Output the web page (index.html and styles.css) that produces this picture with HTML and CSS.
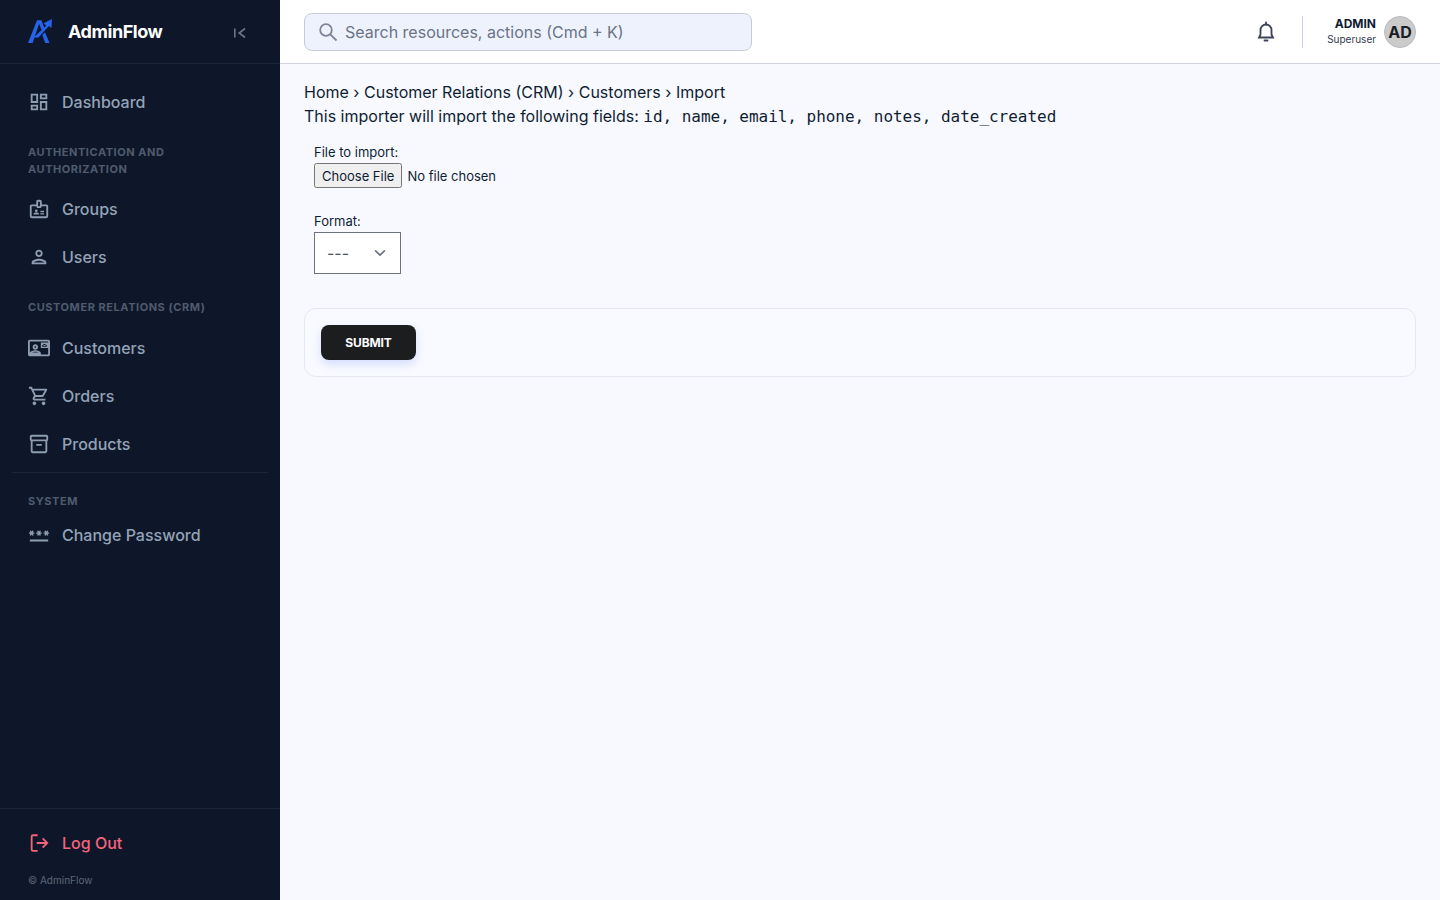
FILE: index.html
```html
<!DOCTYPE html>
<html lang="en">
<head>
  <meta charset="UTF-8" />
  <title>Import | AdminFlow</title>
  <link rel="stylesheet" href="styles.css">
</head>
<body>
  <aside class="sidebar">
    <div class="brand">
      <svg class="logo" viewBox="0 0 24 24" width="24" height="24" fill="#2563eb">
        <path d="M0 24 9 1.200h4.400l3.200 8.300-2.500 2.800-3-7.600L4.600 24z"/>
        <path d="M5.500 18.600 18.300 6.800 15.700 4.300 24 0l-.6 9.200-2.500-2.300L10.500 18.600z"/>
        <path d="M14.300 15.900 17 13.300l4.500 10.700h-4.300z"/>
      </svg>
      <span class="brand-name">AdminFlow</span>
      <svg class="collapse" viewBox="0 0 14 14" width="14" height="14" fill="none" stroke="currentColor" stroke-width="1.600">
        <path d="M1.800 2.500v9M12 2.500 6.200 7l5.800 4.500"/>
      </svg>
    </div>

    <nav class="nav">
      <a class="nav-item">
        <svg class="icon" viewBox="0 0 24 24"><path d="M19 5v2h-4V5h4M9 5v6H5V5h4m10 8v6h-4v-6h4M9 17v2H5v-2h4M21 3h-8v6h8V3zM11 3H3v10h8V3zm10 8h-8v10h8V11zm-10 4H3v6h8v-6z"/></svg>
        Dashboard
      </a>

      <div class="nav-label nav-label-first">Authentication and Authorization</div>
      <a class="nav-item">
        <svg class="icon" viewBox="0 0 24 24"><path d="M20 7h-5V4c0-1.100-.9-2-2-2h-2c-1.100 0-2 .9-2 2v3H4c-1.100 0-2 .9-2 2v11c0 1.100.9 2 2 2h16c1.100 0 2-.9 2-2V9c0-1.100-.9-2-2-2zM11 7V4h2v5h-2V7zm9 13H4V9h5c0 1.100.9 2 2 2h2c1.100 0 2-.9 2-2h5v11z"/><circle cx="9" cy="14" r="1.500"/><path d="M11.080 16.180C10.440 15.900 9.740 15.750 9 15.750s-1.440.15-2.080.43C6.360 16.420 6 16.960 6 17.570V18h6v-.43c0-.61-.36-1.150-.92-1.390zM13.500 14h4v1.500h-4zM13.500 16.500h4V18h-4z"/></svg>
        Groups
      </a>
      <a class="nav-item">
        <svg class="icon" viewBox="0 0 24 24"><path d="M12 6c1.100 0 2 .9 2 2s-.9 2-2 2-2-.9-2-2 .9-2 2-2m0 10c2.700 0 5.800 1.290 6 2H6c.23-.72 3.310-2 6-2m0-12C9.790 4 8 5.790 8 8s1.790 4 4 4 4-1.790 4-4-1.790-4-4-4zm0 10c-2.670 0-8 1.340-8 4v2h16v-2c0-2.660-5.330-4-8-4z"/></svg>
        Users
      </a>

      <div class="nav-label">Customer Relations (CRM)</div>
      <a class="nav-item">
        <svg class="icon" viewBox="0 0 24 24"><path d="M21 8V7l-3 2-3-2v1l3 2 3-2zm1-5H2C.9 3 0 3.900 0 5v14c0 1.100.9 2 2 2h20c1.100 0 1.990-.9 1.990-2L24 5c0-1.100-.9-2-2-2zm0 16H2V5h20v14zM14 17.590c0-2-3.970-3.090-6-3.090s-6 1.090-6 3.090V19h12v-1.410zM4.480 17c.74-.5 2.220-1 3.520-1s2.770.49 3.520 1H4.480zM8 14c1.650 0 3-1.350 3-3s-1.350-3-3-3-3 1.350-3 3 1.350 3 3 3zm0-4c.55 0 1 .45 1 1s-.45 1-1 1-1-.45-1-1 .45-1 1-1zm6-4v6h8V6h-8zm6.500 4.500h-5v-3h5v3z"/></svg>
        Customers
      </a>
      <a class="nav-item">
        <svg class="icon" viewBox="0 0 24 24"><path d="M15.550 13c.75 0 1.410-.41 1.750-1.030l3.580-6.490c.37-.66-.11-1.480-.87-1.480H5.210l-.94-2H1v2h2l3.600 7.590-1.350 2.440C4.520 15.370 5.480 17 7 17h12v-2H7l1.100-2h7.450zM6.160 6h12.150l-2.760 5H8.530L6.160 6zM7 18c-1.100 0-1.990.9-1.990 2S5.900 22 7 22s2-.9 2-2-.9-2-2-2zm10 0c-1.100 0-1.990.9-1.990 2s.89 2 1.990 2 2-.9 2-2-.9-2-2-2z"/></svg>
        Orders
      </a>
      <a class="nav-item">
        <svg class="icon" viewBox="0 0 24 24"><path d="M20 2H4c-1 0-2 .9-2 2v3.010c0 .72.43 1.340 1 1.690V20c0 1.100 1.100 2 2 2h14c.9 0 2-.9 2-2V8.700c.57-.35 1-.97 1-1.690V4c0-1.100-1-2-2-2zm-1 18H5V9h14v11zm1-13H4V4h16v3zM9 12h6v2H9z"/></svg>
        Products
      </a>

      <div class="nav-divider"></div>

      <div class="nav-label nav-label-system">System</div>
      <a class="nav-item">
        <svg class="icon" viewBox="0 0 24 24"><path d="M2 17h20v2H2v-2zm1.150-4.050L4 11.470l.85 1.480 1.300-.75-.85-1.480H7v-1.500H5.300l.85-1.470L4.850 7 4 8.470 3.150 7l-1.300.75.85 1.470H1v1.500h1.700l-.85 1.480 1.300.75zm6.700-.75 1.300.75.85-1.480.85 1.480 1.300-.75-.85-1.480H15v-1.500h-1.700l.85-1.470-1.300-.75L12 8.470 11.150 7l-1.300.75.85 1.470H9v1.500h1.700l-.85 1.480zM23 9.220h-1.700l.85-1.470-1.300-.75L20 8.470 19.150 7l-1.300.75.85 1.470H17v1.500h1.700l-.85 1.480 1.300.75.85-1.480.85 1.480 1.300-.75-.85-1.480H23v-1.500z"/></svg>
        Change Password
      </a>
    </nav>

    <div class="sidebar-footer">
      <a class="nav-item nav-logout">
        <svg class="icon icon-line" viewBox="0 0 24 24"><path d="M10.500 3.500H5.500a1.500 1.500 0 0 0-1.500 1.500v14a1.500 1.500 0 0 0 1.500 1.500h5M9.500 12H20.500M16 7l5 5-5 5"/></svg>
        Log Out
      </a>
      <div class="copyright">© AdminFlow</div>
    </div>
  </aside>

  <div class="page">
    <header class="topbar">
      <div class="search">
        <svg viewBox="0 0 20 20" width="20" height="20" fill="none" stroke="#7b8498" stroke-width="1.800"><circle cx="8" cy="8" r="5.800"/><path d="m12.300 12.300 6.200 6.200"/></svg>
        <input type="text" placeholder="Search resources, actions (Cmd + K)" />
      </div>
      <div class="topbar-right">
        <svg class="bell" viewBox="0 0 24 24" width="24" height="24" fill="none" stroke="#3b4256" stroke-width="1.800"><path d="M12 4.500a5.500 5.500 0 0 0-5.500 5.500v4.500L5 17.500h14l-1.500-3V10A5.500 5.500 0 0 0 12 4.500z"/><path d="M12 2.500v2M10.500 20.500h3" stroke-linecap="round"/></svg>
        <div class="topbar-sep"></div>
        <div class="user">
          <div class="user-name">ADMIN</div>
          <div class="user-role">Superuser</div>
        </div>
        <div class="avatar">AD</div>
      </div>
    </header>

    <main class="content">
      <div class="crumbs">Home › Customer Relations (CRM) › Customers › Import</div>
      <p class="fields">This importer will import the following fields: <code>id, name, email, phone, notes, date_created</code></p>

      <form class="import-form">
        <div class="form-row">
          <label for="import_file">File to import:</label>
          <input type="file" id="import_file" />
        </div>
        <div class="form-row">
          <label for="format">Format:</label>
          <select id="format">
            <option>---</option>
            <option>csv</option>
            <option>json</option>
          </select>
        </div>
        <div class="submit-row">
          <button type="submit">SUBMIT</button>
        </div>
      </form>
    </main>
  </div>
</body>
</html>
```

FILE: styles.css
```css
:root {
  --side-bg: #0e1729;
  --side-text: #94a3b8;
  --side-muted: #4f5b6e;
  --side-line: #1c2638;
  --text: #0f1d33;
  --main-bg: #f8f9ff;
  --line: #cfd3e0;
}
* { box-sizing: border-box; }
html, body { height: 100%; }
body {
  margin: 0;
  display: flex;
  min-height: 100vh;
  font-family: Inter, "Liberation Sans", sans-serif;
  color: var(--text);
  background: var(--main-bg);
}

/* sidebar */
.sidebar {
  width: 280px;
  flex-shrink: 0;
  height: 900px;
  display: flex;
  flex-direction: column;
  background: var(--side-bg);
}
.brand {
  height: 64px;
  display: flex;
  align-items: center;
  padding: 0 33px 0 28px;
  border-bottom: 1px solid var(--side-line);
}
.logo { margin-top: -1px; }
.brand-name {
  margin-left: 16px;
  font-size: 18px;
  font-weight: 700;
  letter-spacing: -0.45px;
  color: #fff;
}
.collapse { margin-left: auto; margin-top: 3px; color: #6b7688; }
.nav {
  flex: 1;
  padding-top: 14px;
}
.nav-item {
  height: 48px;
  display: flex;
  align-items: center;
  gap: 12px;
  padding: 0 28px;
  font-size: 16px;
  font-weight: 500;
  color: var(--side-text);
}
.icon {
  width: 22px;
  height: 22px;
  flex-shrink: 0;
  fill: #8f9db3;
}
.icon-line {
  fill: none;
  stroke: currentColor;
  stroke-width: 2;
}
.nav-label {
  padding: 18px 28px 8px;
  font-size: 11px;
  font-weight: 700;
  line-height: 17px;
  letter-spacing: 0.55px;
  text-transform: uppercase;
  color: var(--side-muted);
}
.nav-label-first { padding-bottom: 7px; }
.nav-label-system { padding-top: 20px; padding-bottom: 1px; }
.nav-divider {
  height: 1px;
  margin: 4px 12px 0;
  background: var(--side-line);
}
.sidebar-footer {
  height: 92px;
  padding-top: 10px;
  border-top: 1px solid var(--side-line);
}
.nav-logout { color: #f4637c; }
.copyright {
  padding: 5px 28px 0;
  font-size: 10px;
  line-height: 16px;
  color: #5d687a;
}

/* top bar */
.page {
  flex: 1;
  min-width: 0;
  display: flex;
  flex-direction: column;
}
.topbar {
  height: 64px;
  display: flex;
  align-items: center;
  justify-content: space-between;
  padding: 0 24px;
  background: #fff;
  border-bottom: 1px solid var(--line);
}
.search {
  width: 448px;
  height: 38px;
  display: flex;
  align-items: center;
  gap: 7px;
  padding: 0 13px;
  background: #eef2fd;
  border: 1px solid #c6cbdc;
  border-radius: 8px;
}
.search svg { flex-shrink: 0; }
.search input {
  flex: 1;
  min-width: 0;
  border: 0;
  outline: 0;
  padding: 0;
  background: transparent;
  font: 400 16px Inter, sans-serif;
  color: var(--text);
}
.search input::placeholder { color: #6b7386; opacity: 1; }
.topbar-right {
  display: flex;
  align-items: center;
}
.bell { margin-right: 24px; }
.topbar-sep {
  width: 1px;
  height: 32px;
  margin-right: 24px;
  background: #cdd0dd;
}
.user { text-align: right; margin-right: 8px; padding-bottom: 1px; }
.user-name {
  font-size: 12px;
  font-weight: 700;
  line-height: 15px;
  color: #0f1d33;
}
.user-role {
  font-size: 10px;
  line-height: 16px;
  color: #303a4e;
}
.avatar {
  width: 32px;
  height: 32px;
  display: flex;
  align-items: center;
  justify-content: center;
  border-radius: 50%;
  background: #cbcbcb;
  border: 1px solid #b8bac0;
  font-size: 16px;
  font-weight: 700;
  color: #1a1d24;
}

/* import form */
.content { padding: 16px 24px; }
.crumbs, .fields {
  margin: 0;
  font-size: 16px;
  line-height: 24px;
}
code {
  font-family: "DejaVu Sans Mono", monospace;
  font-size: 16px;
  letter-spacing: -0.03px;
}
.form-row {
  padding: 0 10px;
  margin-top: 16px;
  font-size: 13px;
}
.form-row + .form-row { margin-top: 26px; }
.form-row label {
  display: block;
  font-size: 13px;
  line-height: 15px;
  margin-bottom: 3px;
}
input[type="file"] {
  display: block;
  font: 400 13px Inter, sans-serif;
  color: var(--text);
}
input[type="file"]::file-selector-button {
  height: 25px;
  padding: 0 6px;
  margin-right: 5px;
  font: 400 13px Inter, sans-serif;
  color: var(--text);
}
select {
  display: block;
  width: 87px;
  height: 42px;
  padding: 0 12px;
  border: 1px solid #6b7280;
  border-radius: 0;
  appearance: none;
  background: #fff url("data:image/svg+xml,%3Csvg xmlns='http://www.w3.org/2000/svg' viewBox='0 0 20 20'%3E%3Cpath fill='none' stroke='%236b7280' stroke-width='1.500' stroke-linecap='round' stroke-linejoin='round' d='m6 8 4 4 4-4'/%3E%3C/svg%3E") no-repeat right 9px center / 22px 22px;
  font: 400 16px Inter, sans-serif;
  color: #4b5563;
}
.submit-row {
  margin-top: 34px;
  padding: 16px;
  background: #f9faff;
  border: 1px solid #e6e8ef;
  border-radius: 12px;
}
button[type="submit"] {
  display: block;
  width: 95px;
  height: 35px;
  border: 0;
  border-radius: 8px;
  background: #1c1d1f;
  box-shadow: 0 4px 10px rgba(59, 110, 240, 0.2);
  font: 700 12px Inter, sans-serif;
  letter-spacing: -0.1px;
  color: #fff;
  cursor: pointer;
}
```
